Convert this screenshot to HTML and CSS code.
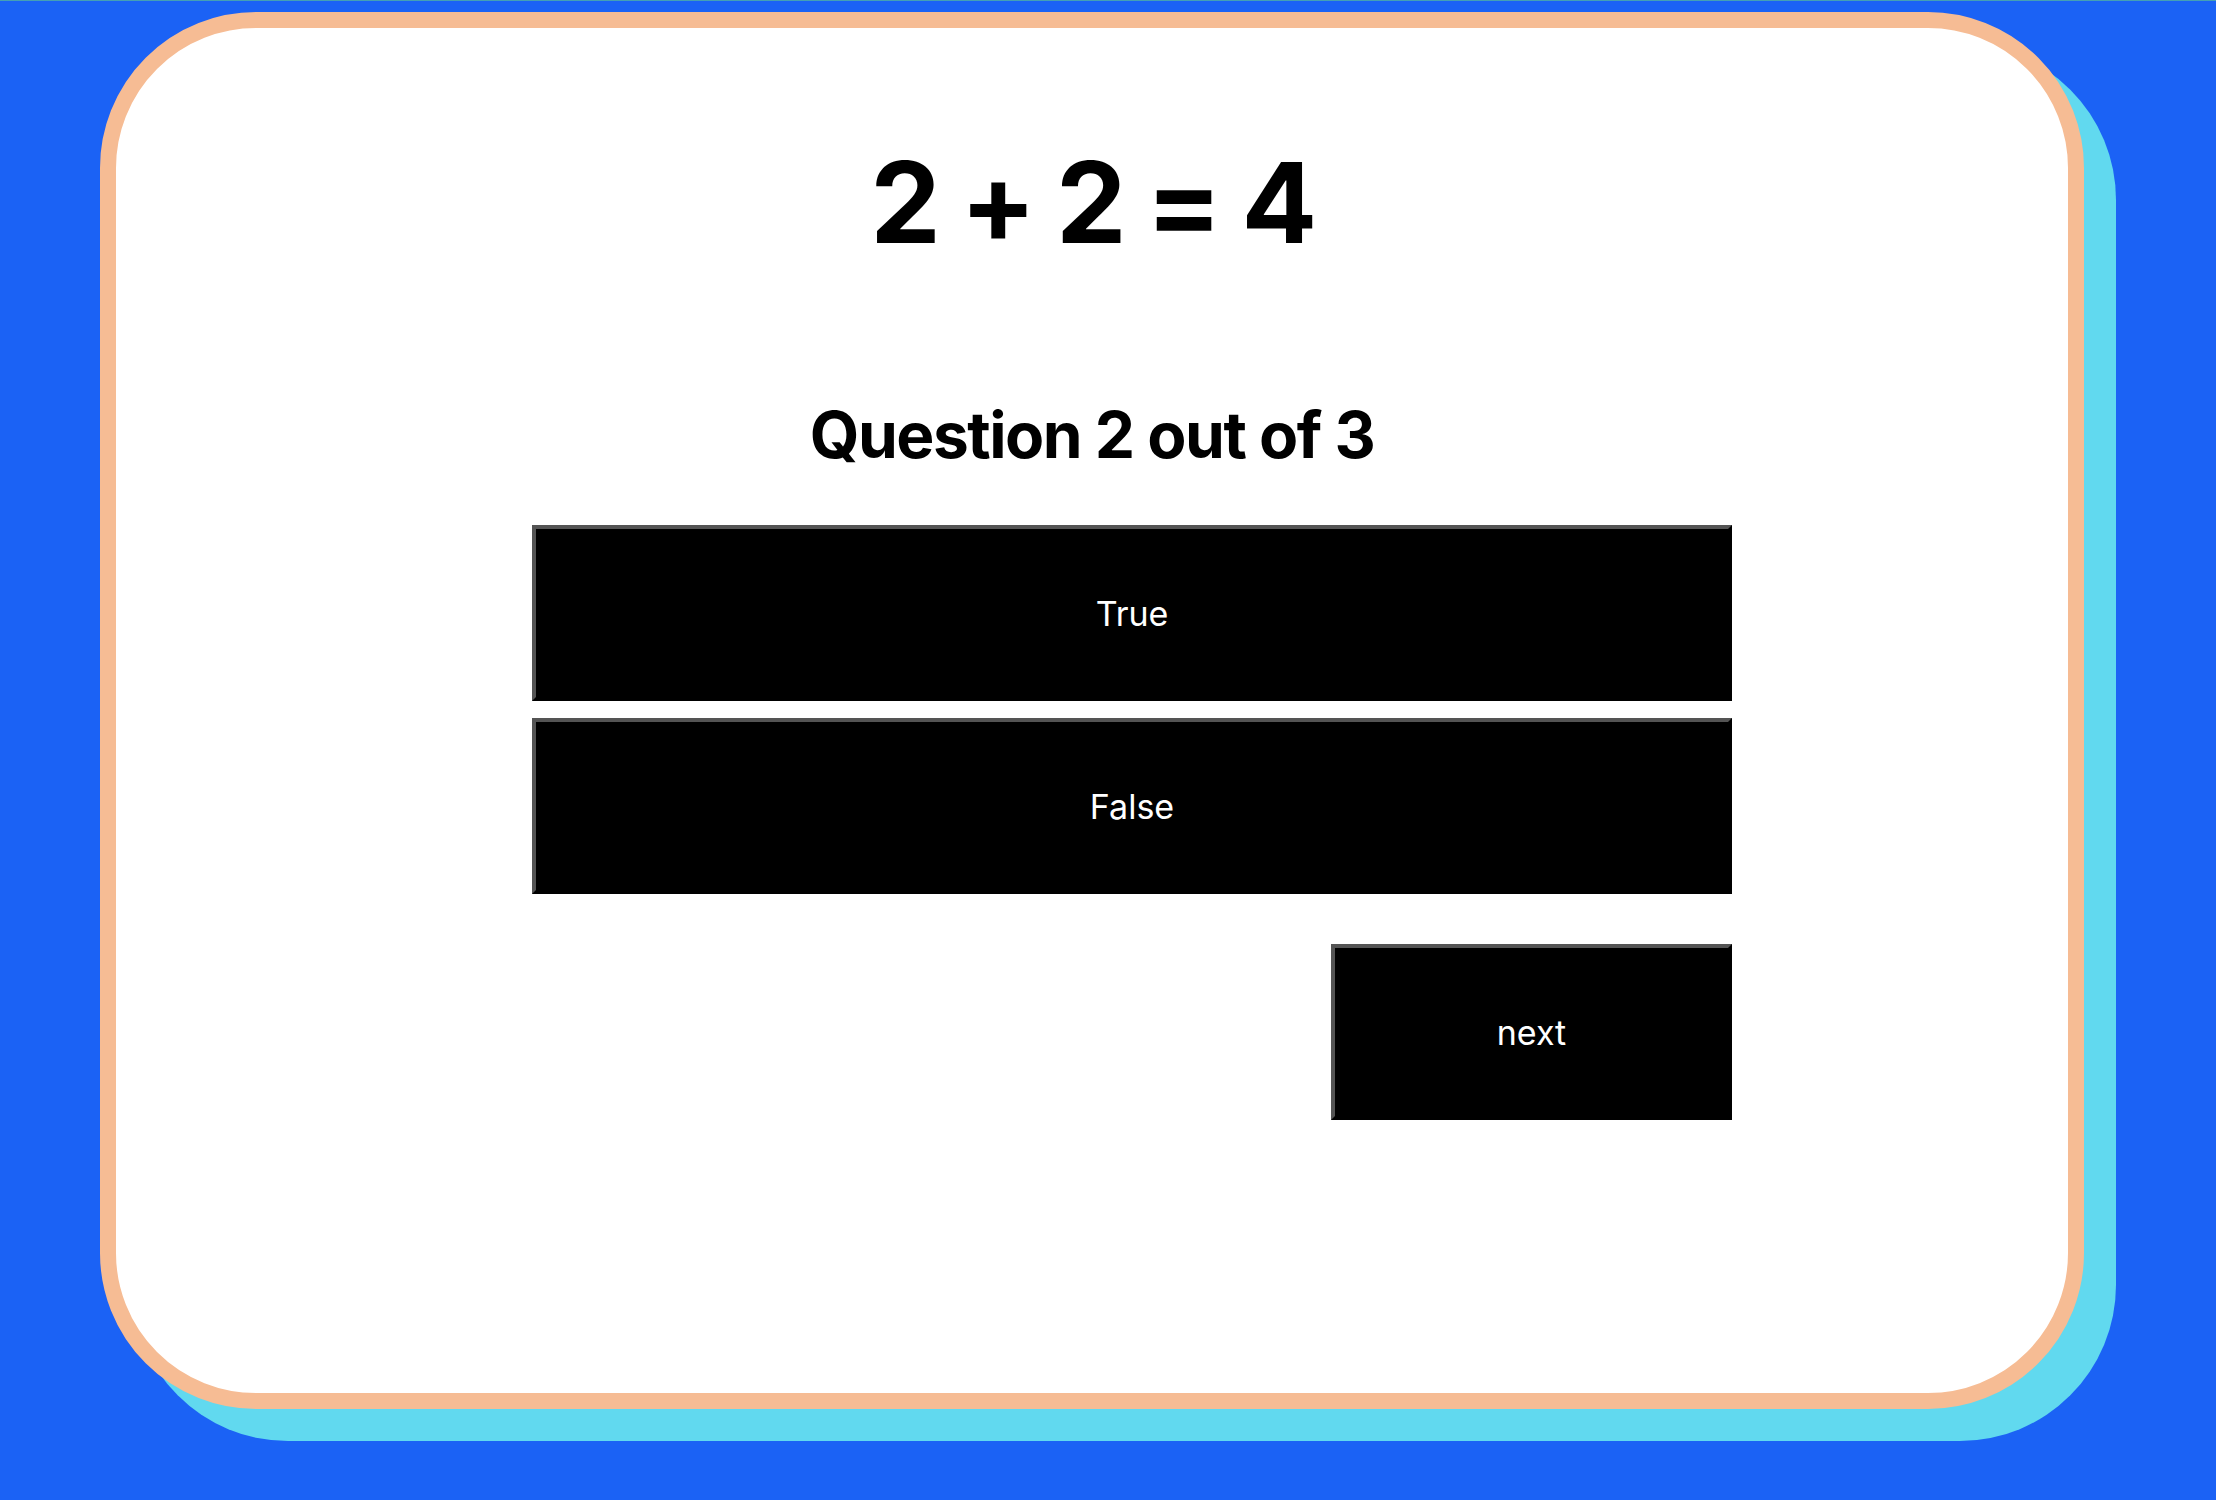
FILE: index.html
```html
<!DOCTYPE html>
<html lang="en">
<head>
<meta charset="utf-8">
<title>Quiz</title>
<link rel="stylesheet" href="styles.css">
</head>
<body>
  <main class="stage">
    <section class="card">
      <h1 class="equation">2 + 2 = 4</h1>
      <h2 class="progress">Question 2 out of 3</h2>
      <div class="answers">
        <button class="btn answer">True</button>
        <button class="btn answer">False</button>
        <div class="actions">
          <button class="btn next">next</button>
        </div>
      </div>
    </section>
  </main>
</body>
</html>
```
FILE: styles.css
```css
html {
  margin: 0;
  background: #1b62f5;
  border-top: 1px solid #45a0b4;
}
body {
  margin: 0;
  font-family: Inter, "Noto Sans", sans-serif;
  background: #1b62f5;
  height: 1499px;
  overflow: hidden;
}
.stage {
  padding: 11px 0 0 100px;
}
.card {
  box-sizing: border-box;
  width: 1984px;
  height: 1397px;
  background: #ffffff;
  border: 16px solid #f6bc94;
  border-radius: 156px;
  box-shadow: 32px 32px 0 0 #61d9ef;
  display: flex;
  flex-direction: column;
  padding-top: 118px;
}
.equation {
  margin: 0;
  font-size: 112px;
  line-height: 1;
  font-weight: 700;
  letter-spacing: -3.5px;
  text-align: center;
  color: #000;
}
.progress {
  margin: 145px 0 0 0;
  font-size: 64px;
  line-height: 1;
  font-weight: 700;
  letter-spacing: -1.5px;
  text-align: center;
  color: #000;
}
.answers {
  margin: 58px 0 0 416px;
  width: 1200px;
  display: flex;
  flex-direction: column;
  gap: 17px;
}
.btn {
  box-sizing: border-box;
  height: 176px;
  background: #000;
  color: #fff;
  font-family: Inter, "Noto Sans", sans-serif;
  font-size: 34px;
  font-weight: 400;
  border-style: solid;
  border-width: 4px;
  border-color: #545454 #000 #000 #545454;
  padding: 0;
  cursor: pointer;
}
.answer {
  width: 100%;
}
.actions {
  display: flex;
  justify-content: flex-end;
  margin-top: 33px;
}
.next {
  width: 401px;
}
```
